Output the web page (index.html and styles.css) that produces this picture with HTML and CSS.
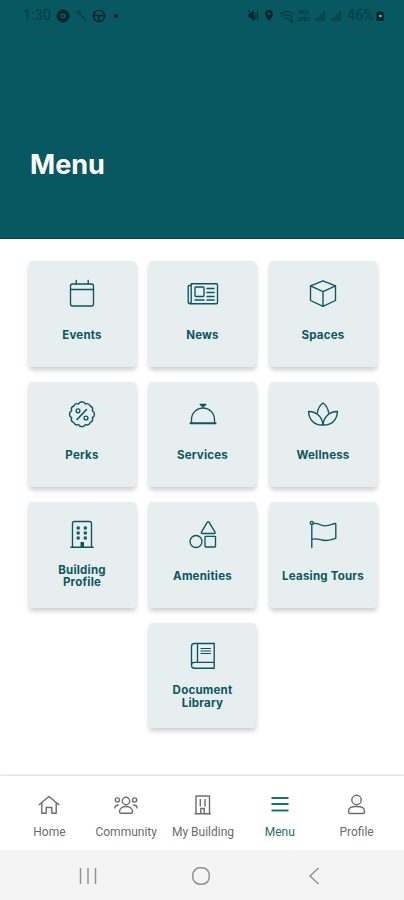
FILE: index.html
```html
<!DOCTYPE html>
<html lang="en">
<head>
<meta charset="utf-8">
<title>Menu</title>
<link rel="stylesheet" href="styles.css">
</head>
<body>
<div class="screen">
  <header class="header">
    <div class="status">
      <div class="status-left">
        <span class="clock">1:30</span>
        <svg class="s-icon" viewBox="0 0 14 14"><circle cx="7" cy="7" r="4.600" fill="none" stroke="currentColor" stroke-width="3.800"/><circle cx="7" cy="7" r="1"/></svg>
        <svg class="s-icon faint" viewBox="0 0 14 14"><path d="M1 2l3 3 2-2-2-2M5 4l8 8" fill="none" stroke="currentColor" stroke-width="1.500"/></svg>
        <svg class="s-icon" viewBox="0 0 14 14"><g fill="none" stroke="currentColor" stroke-width="1.400"><circle cx="7" cy="7" r="5.600"/><path d="M1.500 6.500h11M7 7v5"/></g></svg>
        <i class="dot"></i>
      </div>
      <div class="status-right">
        <svg class="mute" viewBox="0 0 12 14"><path d="M1 5h2l4-4v12L3 9H1z"/><path d="M1 1l8 11M9 4v6M11 2v10" fill="none" stroke="currentColor"/></svg>
        <svg class="pin" viewBox="0 0 10 14"><path fill-rule="evenodd" d="M5 1a4.200 4.200 0 0 0-4.200 4.200C.8 8 5 13 5 13s4.200-5 4.200-7.800A4.200 4.200 0 0 0 5 1zm0 2.800a1.500 1.500 0 1 1 0 3 1.500 1.500 0 0 1 0-3z"/></svg>
        <svg class="wifi" viewBox="0 0 16 14"><path d="M1 5q6.500-5 13 0M3 7.500q4.500-3.500 9 0M5.500 10q2-1.500 4 0M12 8v5m-2-2l2 2 2-2" fill="none" stroke="currentColor" stroke-width="1.200"/></svg>
        <span class="volte"><span>Vo))</span><span>LTE1</span></span>
        <svg class="bars" viewBox="0 0 11 12"><path d="M1 12V9M4 12V7M7 12V4M10 12V1" fill="none" stroke="currentColor" stroke-width="1.500"/></svg>
        <svg class="bars" viewBox="0 0 11 12"><path d="M1 12V9M4 12V7M7 12V4M10 12V1" fill="none" stroke="currentColor" stroke-width="1.500"/></svg>
        <span class="battery">46%</span>
        <svg class="cell" viewBox="0 0 8 12"><path d="M2.500 1h3v1.500H8V12H0V2.500h2.500z"/><circle cx="4.500" cy="6.500" r="1.300" fill="#a9bfc1"/></svg>
      </div>
    </div>
    <h1 class="title">Menu</h1>
  </header>

  <main class="grid">
    <a class="card">
      <svg class="icon" viewBox="0 0 32 32"><rect x="4.500" y="6" width="23" height="22" rx="2"/><path d="M4.500 11.500h23M10.200 2.500V6M22.200 2.500V6"/></svg>
      <span class="label"><span>Events</span></span>
    </a>
    <a class="card">
      <svg class="icon" viewBox="0 0 32 32"><path d="M4.200 7.500V5.700h25.300q1 0 1 1v18q0 1-1 1H3.200q-2 0-2-2V8.500q0-1 1-1h2v16q0 2-1.500 2"/><rect x="8" y="9" width="9" height="9.500" rx="1"/><path d="M20 10.500h7M20 14.500h7M20 18.500h7M20 22h7M8 22h9"/></svg>
      <span class="label"><span>News</span></span>
    </a>
    <a class="card">
      <svg class="icon" viewBox="0 0 32 32"><path d="M16 2.800l12.500 5v14.700L16 28.300 3.500 22.500V7.800zM3.500 7.800L16 13.600l12.500-5.800M16 13.600v14.700"/></svg>
      <span class="label"><span>Spaces</span></span>
    </a>
    <a class="card">
      <svg class="icon" viewBox="0 0 32 32"><g transform="translate(1.900 1.200) scale(.88)"><path d="M12.100 4.300a4.300 4.300 0 0 1 7.800 0 4.300 4.300 0 0 1 5.500 2.300 4.300 4.300 0 0 1 2.300 5.500 4.300 4.300 0 0 1 0 7.800 4.300 4.300 0 0 1-2.300 5.500 4.300 4.300 0 0 1-5.500 2.300 4.300 4.300 0 0 1-7.800 0 4.300 4.300 0 0 1-5.500-2.300 4.300 4.300 0 0 1-2.300-5.500 4.300 4.300 0 0 1 0-7.800 4.300 4.300 0 0 1 2.300-5.500 4.300 4.300 0 0 1 5.500-2.300z" stroke-width="1.600"/></g><circle cx="12" cy="11.800" r="1.900"/><circle cx="20" cy="19" r="1.900"/><path d="M20.500 10.500l-9.500 10" stroke-width="1.600"/></svg>
      <span class="label"><span>Perks</span></span>
    </a>
    <a class="card">
      <svg class="icon" viewBox="0 0 32 32"><path d="M4.500 24V20.500a11.500 11.500 0 0 1 23 0V24M16 8.800V6M13.200 5.500h5.600L16 7.800z"/><path class="heavy" d="M3.500 24.200h25"/></svg>
      <span class="label"><span>Services</span></span>
    </a>
    <a class="card">
      <svg class="icon" viewBox="0 0 32 32"><path d="M10.300 13.800C11 9.500 13 6.300 16 4c3 2.300 5 5.500 5.700 9.800"/><path d="M16 26C15.500 18.500 9.500 12.200 1.500 12.500 2 20.500 7 26.500 16 26zM16 26C16.500 18.500 22.500 12.200 30.500 12.500 30 20.500 25 26.500 16 26z"/></svg>
      <span class="label"><span>Wellness</span></span>
    </a>
    <a class="card">
      <svg class="icon" viewBox="0 0 32 32"><path d="M6.500 28V4.500q0-2 2-2h15q2 0 2 2V28M4.800 28.200h22.400"/><path class="solid" d="M10.700 7.500h3v3h-3zM17.800 7.500h3v3h-3zM10.700 12.500h3v3h-3zM17.800 12.500h3v3h-3zM10.700 17.500h3v3h-3zM17.800 17.500h3v3h-3zM14.500 23h3.500v5h-3.500z"/></svg>
      <span class="label"><span>Building<br>Profile</span></span>
    </a>
    <a class="card">
      <svg class="icon" viewBox="0 0 32 32"><path d="M20.200 3.300q1-1.500 2 0l5.800 9.900q.5 1.300-.8 1.300h-12q-1.300 0-.8-1.300z"/><circle cx="9" cy="22.500" r="6"/><rect x="18" y="17.300" width="10.500" height="10.700" rx=".7"/></svg>
      <span class="label"><span>Amenities</span></span>
    </a>
    <a class="card">
      <svg class="icon" viewBox="0 0 32 32"><circle cx="4.800" cy="3.900" r="1.500"/><path d="M4.800 5.400v23.100M6.300 4.500c4.500-1 7.500 2.300 12 2.300 3.500 0 6-1.200 9.500-2.300q1-.3 1 1v13.800c-4 1.200-6.500 2.200-10.500 2.200-4.500 0-8-2.800-13.500-1.200"/></svg>
      <span class="label"><span>Leasing Tours</span></span>
    </a>
    <a class="card last">
      <svg class="icon" viewBox="0 0 32 32"><path d="M27.200 22.500V3.500H7.500q-3 0-3 3v18.700q0 3 3 3h19.700v-5.700M4.500 25q0-2.700 3-2.700h19.700M10.500 3.500v18.800"/><path class="thin" d="M14 8.500h9.500M14 11h9.500M14 13.500h9.500"/></svg>
      <span class="label"><span>Document<br>Library</span></span>
    </a>
  </main>

  <nav class="tabs">
    <a class="tab"><svg viewBox="0 0 24 24"><path d="M1.800 12L12 3.500 22.200 12M4.800 10v10.300h4.400v-5.800h5.600v5.800h4.400V10"/></svg><span>Home</span></a>
    <a class="tab"><svg viewBox="0 0 24 24"><circle cx="12" cy="8" r="3.700"/><path d="M5.500 18.800c0-7 13-7 13 0q0 1.400-1.400 1.400H6.900q-1.400 0-1.400-1.400z"/><circle cx="3.400" cy="7" r="2.100"/><circle cx="20.600" cy="7" r="2.100"/><path d="M.8 15.500c0-2.500 1.500-3.500 4-3.500M23.200 15.500c0-2.500-1.500-3.500-4-3.500"/></svg><span>Community</span></a>
    <a class="tab"><svg viewBox="0 0 24 24"><path d="M5 20.500V3h13.500v17.500M3.500 20.700H20M9.800 20v-4.500h3.400V20M9.300 6v7.500M14 6v7.500"/></svg><span>My Building</span></a>
    <a class="tab active"><svg viewBox="0 0 24 24"><path d="M3.500 5h17M3.500 11h17M3.500 17.500h17"/></svg><span>Menu</span></a>
    <a class="tab"><svg viewBox="0 0 24 24"><circle cx="11.500" cy="7" r="4.700"/><path d="M3.500 18.500c0-4.500 3-5 8-5s8 .5 8 5q0 2-1.500 2h-13Q3.500 20.500 3.500 18.500z"/></svg><span>Profile</span></a>
  </nav>

  <footer class="system">
    <svg viewBox="0 0 24 24"><path d="M4.500 4v16M12 4v16M19.500 4v16"/></svg>
    <svg viewBox="0 0 24 24"><rect x="3.800" y="3.800" width="16.400" height="16.400" rx="7"/></svg>
    <svg viewBox="0 0 24 24"><path d="M16.500 4L8 12l8.500 8"/></svg>
  </footer>
</div>
</body>
</html>
```
FILE: styles.css
```css
* { box-sizing: border-box; }
body { margin: 0; background: #fff; }
.screen {
  width: 404px;
  height: 900px;
  display: flex;
  flex-direction: column;
  overflow: hidden;
  font-family: Inter, "Liberation Sans", sans-serif;
}
.header {
  height: 239px;
  flex: none;
  background: #075861;
  border-bottom: 1.500px solid #063e4d;
}
.status {
  height: 31px;
  padding: 0 20px 0 23px;
  display: flex;
  justify-content: space-between;
  align-items: center;
  color: #04343d;
  font: 14.500px Roboto, sans-serif;
}
.status svg { fill: currentColor; display: block; }
.status-left, .status-right { display: flex; align-items: center; }
.clock { width: 33px; color: #063c45; }
.s-icon { width: 14px; height: 14px; margin-right: 4px; color: #02242b; }
.s-icon.faint { color: #06414a; }
.dot { width: 4px; height: 4px; margin-left: 4px; border-radius: 50%; background: #02242b; }
.mute { width: 12px; height: 13px; margin-right: 5px; color: #02242b; }
.pin { width: 10px; height: 13px; margin-right: 5px; color: #02242b; }
.wifi { width: 17px; height: 14px; margin-right: 2px; }
.volte { display: flex; flex-direction: column; width: 17px; font-size: 5.500px; line-height: 7px; font-weight: 700; }
.bars { width: 10px; height: 11px; margin-right: 6px; color: #063c45; }
.battery { width: 28px; font-size: 14.500px; white-space: nowrap; color: #063c45; }
.cell { width: 8px; height: 11px; margin-left: 1px; color: #02242b; }
.title {
  margin: 115.500px 0 0 30px;
  color: #fff;
  font-size: 27px;
  line-height: 36px;
  font-weight: 700;
}
.grid {
  flex: 1;
  display: grid;
  grid-template-columns: repeat(3, 107px);
  grid-auto-rows: 105.500px;
  gap: 15px 13.500px;
  align-content: start;
  padding: 22px 0 0 28.500px;
}
.card {
  display: flex;
  flex-direction: column;
  align-items: center;
  padding-top: 17px;
  border-radius: 4px;
  background: #e7eef0;
  box-shadow: 0 3px 5px rgba(0, 0, 0, .2);
  color: #0b5660;
}
.card.last { grid-column: 2; }
.icon {
  width: 32px;
  height: 32px;
  fill: none;
  stroke: currentColor;
  stroke-width: 1.350;
  stroke-linejoin: round;
  stroke-linecap: round;
}
.icon .heavy { stroke-width: 2; }
.icon .thin { stroke-width: 1; }
.icon .solid { fill: currentColor; stroke: none; }
.label {
  height: 50px;
  display: flex;
  align-items: center;
  text-align: center;
  font-size: 11.500px;
  line-height: 12.500px;
  font-weight: 700;
  letter-spacing: .22px;
}
.tabs {
  height: 74px;
  flex: none;
  display: flex;
  padding: 17px 9px 0 11px;
  box-shadow: 0 -1px 2px rgba(0, 0, 0, .15);
}
.tab {
  flex: 1 1 0;
  display: flex;
  flex-direction: column;
  align-items: center;
  color: #6c6c6c;
  font: 12px/16px Roboto, sans-serif;
  white-space: nowrap;
}
.tab svg {
  width: 24px;
  height: 24px;
  margin-bottom: 7px;
  fill: none;
  stroke: currentColor;
  stroke-width: 1.400;
  stroke-linejoin: round;
}
.tab.active { color: #1c7064; }
.tab.active svg { stroke-width: 2.200; }
.system {
  height: 50px;
  flex: none;
  display: flex;
  align-items: center;
  gap: 89px;
  padding: 2px 0 0 76px;
  background: #f4f4f4;
}
.system svg { width: 24px; height: 24px; fill: none; stroke: #929292; stroke-width: 1.500; }
```
